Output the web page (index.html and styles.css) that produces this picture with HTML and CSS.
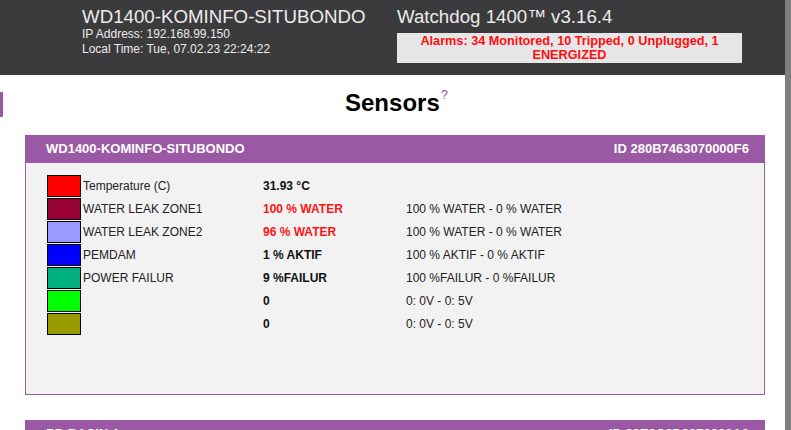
FILE: index.html
```html
<!DOCTYPE html>
<html>
<head>
<meta charset="utf-8">
<title>Watchdog 1400 - Sensors</title>
<link rel="stylesheet" href="styles.css">
</head>
<body>
<div class="page">
  <div class="main">
    <header class="topbar">
      <div class="site">
        <div class="title">WD1400-KOMINFO-SITUBONDO</div>
        <div class="info">IP Address: 192.168.99.150</div>
        <div class="info">Local Time: Tue, 07.02.23 22:24:22</div>
      </div>
      <div class="product">
        <div class="title">Watchdog 1400™ v3.16.4</div>
        <div class="alarm">Alarms: 34 Monitored, 10 Tripped, 0 Unplugged, 1<br>ENERGIZED</div>
      </div>
    </header>

    <div class="heading-row">
      <div class="marker"></div>
      <h1 class="heading">Sensors<sup class="help">?</sup></h1>
      <div class="marker-spacer"></div>
    </div>

    <section class="panel">
      <div class="panel-head"><span>WD1400-KOMINFO-SITUBONDO</span><span>ID 280B7463070000F6</span></div>
      <div class="panel-body">
        <div class="sensor-grid">
          <div class="swatch sw-red"></div><div class="label">Temperature (C)</div><div class="value">31.93 °C</div><div class="range"></div>
          <div class="swatch sw-maroon"></div><div class="label">WATER LEAK ZONE1</div><div class="value alert">100 % WATER</div><div class="range">100 % WATER - 0 % WATER</div>
          <div class="swatch sw-lilac"></div><div class="label">WATER LEAK ZONE2</div><div class="value alert">96 % WATER</div><div class="range">100 % WATER - 0 % WATER</div>
          <div class="swatch sw-blue"></div><div class="label">PEMDAM</div><div class="value">1 % AKTIF</div><div class="range">100 % AKTIF - 0 % AKTIF</div>
          <div class="swatch sw-teal"></div><div class="label">POWER FAILUR</div><div class="value">9 %FAILUR</div><div class="range">100 %FAILUR - 0 %FAILUR</div>
          <div class="swatch sw-green"></div><div class="label"></div><div class="value">0</div><div class="range">0: 0V - 0: 5V</div>
          <div class="swatch sw-olive"></div><div class="label"></div><div class="value">0</div><div class="range">0: 0V - 0: 5V</div>
        </div>
      </div>
    </section>

    <section class="panel next">
      <div class="panel-head"><span>PD BASIN A</span><span>ID 28E9C8D3070000A3</span></div>
      <div class="panel-body"></div>
    </section>
  </div>
  <div class="scrollbar"></div>
</div>
</body>
</html>
```
FILE: styles.css
```css
html, body {
  margin: 0;
  padding: 0;
  overflow: hidden;
  background: #ffffff;
  font-family: "Liberation Sans", Arial, sans-serif;
}

.page {
  display: flex;
  height: 430px;
  overflow: hidden;
}

.main {
  width: 785px;
  flex: none;
}

.scrollbar {
  width: 6px;
  flex: none;
  background: #7f7f7f;
}

/* top bar */
.topbar {
  display: flex;
  height: 75px;
  background: #3b3b3d;
  padding-left: 82px;
  box-sizing: border-box;
  color: #ececec;
}

.site {
  width: 315px;
  padding-top: 6px;
}

.product {
  padding-top: 6px;
}

.title {
  font-size: 18.7px;
  line-height: 21px;
  white-space: nowrap;
}

.info {
  font-size: 12px;
  line-height: 14.5px;
  white-space: nowrap;
}

.alarm {
  width: 345px;
  margin-top: 6px;
  padding: 1px 0;
  background: #e6e6e8;
  color: #ff0d0d;
  font-weight: bold;
  font-size: 12.7px;
  line-height: 14px;
  text-align: center;
}

/* heading */
.heading-row {
  display: grid;
  grid-template-columns: 3px 1fr 3px;
  margin-top: 17px;
  height: 25px;
}

.marker {
  background: #9b59a5;
  height: 25px;
}

.heading {
  margin: 0;
  padding-left: 8px;
  text-align: center;
  font-size: 24px;
  line-height: 21px;
  font-weight: bold;
  color: #000;
}

.help {
  font-size: 13px;
  font-weight: normal;
  color: #9b59a5;
  vertical-align: top;
  line-height: 12px;
  position: relative;
  top: -3px;
  margin-left: 1px;
}

/* panels */
.panel {
  margin: 18px 20px 0 25px;
}

.panel.next {
  margin-top: 25px;
}

.panel-head {
  display: flex;
  justify-content: space-between;
  height: 28px;
  line-height: 28px;
  padding: 0 16px 0 21px;
  background: #9b59a5;
  color: #ffffff;
  font-size: 13px;
  font-weight: bold;
}

.panel-body {
  background: #f2f2f2;
  border: 1px solid #9b59a5;
  border-top: none;
  padding: 12px 0 59px 21px;
  min-height: 60px;
}

.sensor-grid {
  display: grid;
  grid-template-columns: 36px 180px 143px 1fr;
  grid-auto-rows: 22px;
  row-gap: 1px;
  align-items: center;
  font-size: 12px;
  color: #222;
}

.swatch {
  width: 32px;
  height: 20px;
  border: 1px solid #000;
}

.sw-red { background: #ff0000; }
.sw-maroon { background: #990033; }
.sw-lilac { background: #9999ff; }
.sw-blue { background: #0000ff; }
.sw-teal { background: #00b07f; }
.sw-green { background: #00ff00; }
.sw-olive { background: #999900; }

.label {
  white-space: nowrap;
}

.value {
  font-weight: bold;
  color: #111;
  white-space: nowrap;
}

.value.alert {
  color: #ff1414;
}

.range {
  white-space: nowrap;
}
```
